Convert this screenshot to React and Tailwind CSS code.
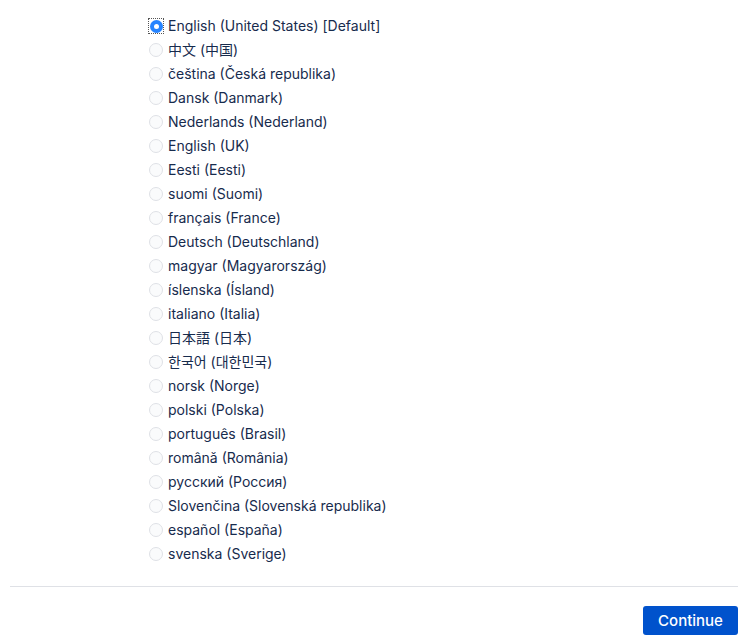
import React, {useState} from "react"

const languages = [
    "English (United States) [Default]",
    "中文 (中国)",
    "čeština (Česká republika)",
    "Dansk (Danmark)",
    "Nederlands (Nederland)",
    "English (UK)",
    "Eesti (Eesti)",
    "suomi (Suomi)",
    "français (France)",
    "Deutsch (Deutschland)",
    "magyar (Magyarország)",
    "íslenska (Ísland)",
    "italiano (Italia)",
    "日本語 (日本)",
    "한국어 (대한민국)",
    "norsk (Norge)",
    "polski (Polska)",
    "português (Brasil)",
    "română (România)",
    "русский (Россия)",
    "Slovenčina (Slovenská republika)",
    "español (España)",
    "svenska (Sverige)",
]

const Radio = ({checked}) => (
    checked ? (
        <span className="w-[16px] h-[16px] flex items-center justify-center outline outline-1 outline-dotted outline-[#555] -outline-offset-1">
            <span className="w-[13px] h-[13px] rounded-full bg-[#2684ff] flex items-center justify-center">
                <span className="w-[5px] h-[5px] rounded-full bg-white"></span>
            </span>
        </span>
    ) : (
        <span className="w-[16px] h-[16px] flex items-center justify-center">
            <span className="w-[14px] h-[14px] rounded-full border border-[#dfe1e6] bg-[#fafbfc]"></span>
        </span>
    )
)

const App = () => {
    const [selected, setSelected] = useState(0)

    return (
        <div className="bg-white min-h-[643px] text-[#172b4d]" style={{fontFamily: 'Inter, "Noto Sans CJK SC", sans-serif'}}>
            <div className="pl-[148px] pt-[14px]">
                {languages.map((lang, i) => (
                    <div key={lang} className="h-[24px] flex items-center gap-[4px] cursor-pointer" onClick={() => setSelected(i)}>
                        <Radio checked={selected === i}/>
                        <span className="text-[14px] leading-[24px]" style={i === 13 ? {fontFamily: 'Inter, "Noto Sans CJK JP", sans-serif'} : i === 14 ? {fontFamily: 'Inter, "Noto Sans CJK KR", sans-serif'} : undefined}>{lang}</span>
                    </div>
                ))}
            </div>
            <div className="ml-[10px] mr-[12px] mt-[20px] border-t border-[#dfe1e6]"></div>
            <div className="flex justify-end mr-[12px] mt-[19px]">
                <button className="h-[29px] w-[95px] pt-[2px] rounded-[3px] bg-[#0052cc] text-white text-[15px] font-medium">
                    Continue
                </button>
            </div>
        </div>
    )
}

export default App
